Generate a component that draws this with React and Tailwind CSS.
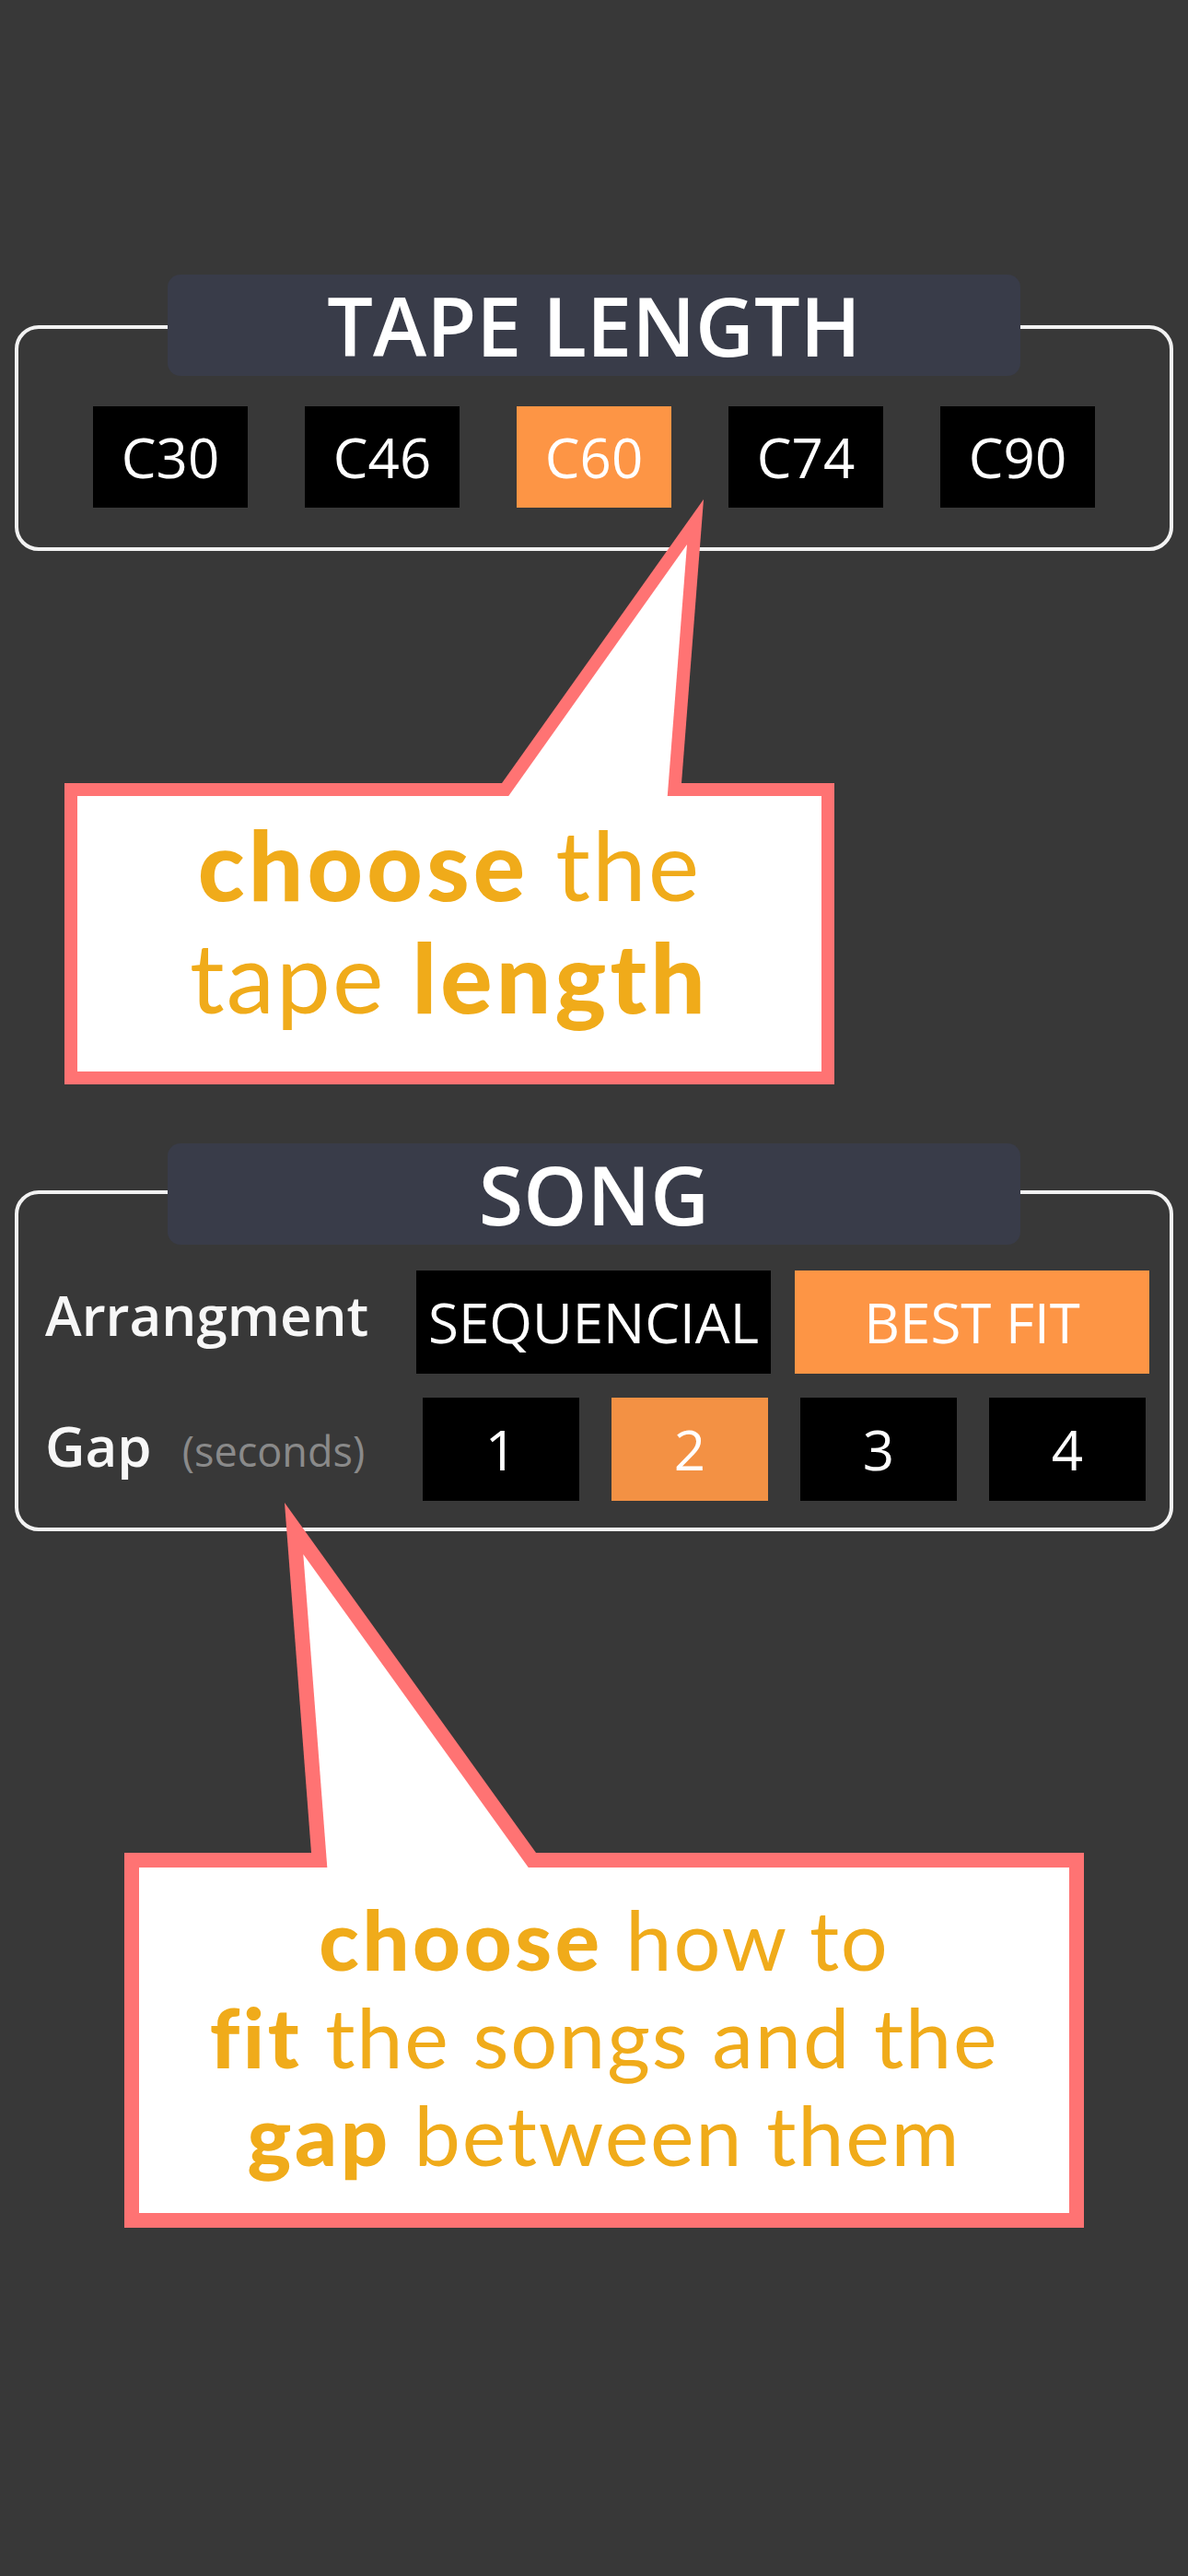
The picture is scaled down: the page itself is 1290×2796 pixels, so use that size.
const tapes = ['C30', 'C46', 'C60', 'C74', 'C90'];
const gaps = ['1', '2', '3', '4'];

const ui = "font-['Open_Sans','DejaVu_Sans',sans-serif]";
const note = "font-['Lato','Open_Sans',sans-serif]";

const Tab = ({ children }) => (
  <div className="relative z-10 flex h-[110px] w-[926px] items-center justify-center rounded-[14px] bg-[#393c49]">
    <h2 className="text-[88px] font-semibold leading-none text-white">{children}</h2>
  </div>
);

const Option = ({ label, active, activeColor = 'bg-[#fd9545]', className = '' }) => (
  <button
    className={`flex items-center justify-center text-[60px] leading-none text-white ${
      active ? activeColor : 'bg-black'
    } ${className}`}
  >
    {label}
  </button>
);

const B = ({ children }) => <b className="font-black tracking-[0.04em]">{children}</b>;

// speech bubble: bordered box plus a tail drawn as two stacked triangles
const Callout = ({ width, height, border, tail, viewTop, children, className = '' }) => (
  <div className={`relative ${className}`} style={{ width }}>
    <div
      className="flex flex-col items-center bg-white border-[#ff7373]"
      style={{ height, borderWidth: border }}
    >
      {children}
    </div>
    <svg
      className="absolute left-0"
      style={{ top: viewTop, width: 1100, height: -viewTop + 24 }}
      viewBox={`0 ${viewTop} 1100 ${-viewTop + 24}`}
    >
      <polygon points={tail.outer} fill="#ff7373" />
      <polygon points={tail.inner} fill="#ffffff" />
    </svg>
  </div>
);

export default function App() {
  return (
    <div className={`min-h-[2796px] w-[1290px] bg-[#383838] pt-[298px] ${ui}`}>
      {/* tape length */}
      <section className="flex flex-col items-center">
        <Tab>TAPE LENGTH</Tab>
        <div className="-mt-[55px] w-[1258px] rounded-[26px] border-4 border-[#f2f2f2] pt-[84px] pb-[43px]">
          <div className="flex justify-center gap-[62px]">
            {tapes.map((t) => (
              <Option key={t} label={t} active={t === 'C60'} className="h-[110px] w-[168px]" />
            ))}
          </div>
        </div>
      </section>

      <Callout
        className="ml-[70px] mt-[252px]"
        width={836}
        height={327}
        border={14}
        viewTop={-320}
        tail={{
          outer: '475,0 694,-308 670,0',
          inner: '481.5,15 676,-259 654.7,15',
        }}
      >
        <p className={`${note} pt-[12px] text-center text-[105px] leading-[122px] tracking-[0.02em] text-[#f0ab1a]`}>
          <B>choose</B> the
          <br />
          tape <B>length</B>
        </p>
      </Callout>

      {/* song */}
      <section className="mt-[64px] flex flex-col items-center">
        <Tab>SONG</Tab>
        <div className="-mt-[59px] w-[1258px] rounded-[26px] border-4 border-[#f2f2f2] pl-[29px] pt-[83px] pb-[29px]">
          <div className="flex items-center">
            <span className="w-[403px] pb-[16px] text-[60px] font-semibold leading-none text-[#f7f7f7]">
              Arrangment
            </span>
            <div className="flex gap-[26px]">
              <Option label="SEQUENCIAL" className="h-[112px] w-[385px]" />
              <Option label="BEST FIT" active className="h-[112px] w-[385px]" />
            </div>
          </div>
          <div className="mt-[26px] flex items-center">
            <span className="flex w-[410px] items-baseline gap-[33px] pb-[8px] leading-none">
              <span className="text-[60px] font-semibold text-[#f7f7f7]">Gap</span>
              <span className="text-[45px] text-[#8a8a8a]">(seconds)</span>
            </span>
            <div className="flex gap-[35px]">
              {gaps.map((g) => (
                <Option
                  key={g}
                  label={g}
                  active={g === '2'}
                  activeColor="bg-[#f39144]"
                  className="h-[112px] w-[170px]"
                />
              ))}
            </div>
          </div>
        </div>
      </section>

      <Callout
        className="ml-[135px] mt-[349px]"
        width={1042}
        height={407}
        border={16}
        viewTop={-392}
        tail={{
          outer: '203,0 174,-380 447,0',
          inner: '220.4,17 194.3,-324 439.5,17',
        }}
      >
        <p className={`${note} pt-[24px] text-center text-[90px] leading-[106px] tracking-[0.02em] text-[#f0ab1a]`}>
          <B>choose</B> how to
          <br />
          <B>fit</B> the songs and the
          <br />
          <B>gap</B> between them
        </p>
      </Callout>
    </div>
  );
}
